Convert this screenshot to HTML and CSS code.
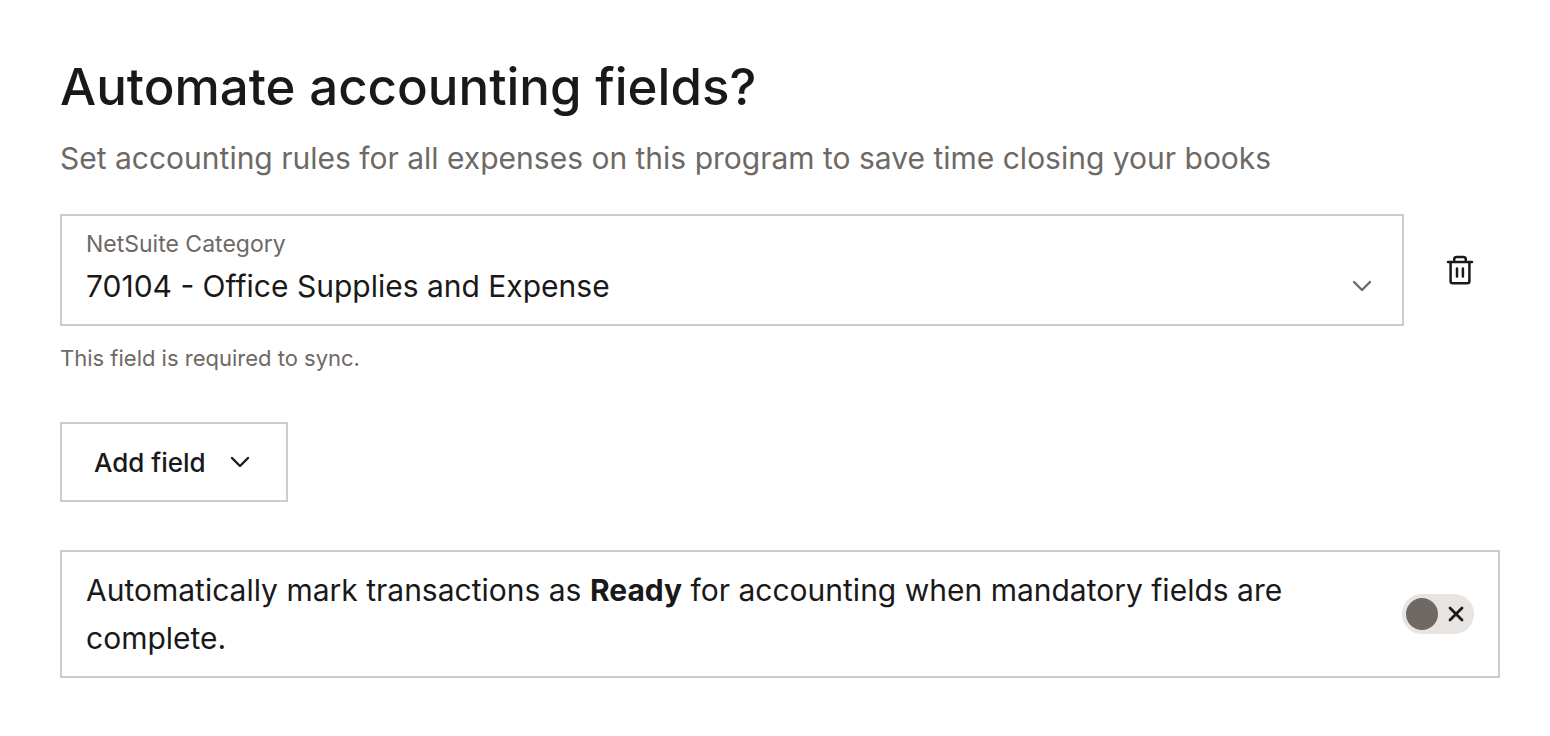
FILE: index.html
```html
<!DOCTYPE html>
<html lang="en">
<head>
    <meta charset="UTF-8">
    <meta name="viewport" content="width=device-width, initial-scale=1.0">
    <title>Automate accounting fields</title>
    <link rel="stylesheet" href="styles.css">
</head>
<body>
<main class="page">
    <h1 class="title">Automate accounting fields?</h1>
    <p class="subtitle">Set accounting rules for all expenses on this program to save time closing your books</p>
    <form class="rules-form">
        <div class="field-row">
            <div class="field">
                <label class="field-label" for="category">NetSuite Category</label>
                <div class="select-wrapper">
                    <select id="category" class="field-select" aria-describedby="category-hint">
                        <option>70104 - Office Supplies and Expense</option>
                    </select>
                    <svg class="chevron" viewBox="0 0 20 12" aria-hidden="true"><path d="M2 2l8 8 8-8"/></svg>
                </div>
            </div>
            <button type="button" class="delete-button" aria-label="Delete field">
                <svg class="trash" viewBox="0 0 28 32" aria-hidden="true">
                    <path d="M2 7.9h24M8.2 7.5V5.4a2.4 2.4 0 0 1 2.4-2.4h6.8a2.4 2.4 0 0 1 2.4 2.4v2.1M4.6 8v19.2a2 2 0 0 0 2 2h14.8a2 2 0 0 0 2-2V8M11 14.5v8M16.9 14.5v8"/>
                </svg>
            </button>
        </div>
        <p id="category-hint" class="hint">This field is required to sync.</p>
        <button type="button" class="add-button">
            Add field
            <svg class="chevron chevron-dark" viewBox="0 0 20 12" aria-hidden="true"><path d="M2 2l8 8 8-8"/></svg>
        </button>
        <div class="toggle-row">
            <label class="toggle-label" for="autoReady">Automatically mark transactions as <strong>Ready</strong> for accounting when mandatory fields are complete.</label>
            <span class="toggle">
                <input type="checkbox" role="switch" id="autoReady" class="toggle-input">
                <svg class="toggle-icon" viewBox="0 0 16 16" aria-hidden="true"><path d="M2 2l12 12M14 2L2 14"/></svg>
            </span>
        </div>
    </form>
</main>
</body>
</html>
```

FILE: styles.css
```css
* {
    box-sizing: border-box;
}
body {
    margin: 0;
    background-color: #fff;
    color: #1a1919;
    font-family: Inter, "Liberation Sans", sans-serif;
}
.page {
    padding: 56px 50px 56px 60px;
}
.title {
    margin: 0;
    font-size: 51px;
    line-height: 62px;
    font-weight: 500;
}
.subtitle {
    margin: 16px 0 32px;
    font-size: 30px;
    line-height: 48px;
    color: #6e6965;
}
.field-row {
    display: flex;
    align-items: center;
}
.field {
    flex: 1;
    padding: 12px 24px;
    border: 2px solid #d0cbc7;
}
.field-label {
    display: block;
    font-size: 23px;
    line-height: 32px;
    color: #6e6965;
}
.select-wrapper {
    display: grid;
    align-items: center;
}
.field-select {
    grid-area: 1 / 1;
    width: 100%;
    height: 52px;
    padding: 0;
    border: none;
    background: none;
    color: #1a1919;
    font: inherit;
    font-size: 30px;
    appearance: none;
}
.chevron {
    width: 20px;
    height: 12px;
    fill: none;
    stroke: #6e6965;
    stroke-width: 2.4;
    stroke-linecap: round;
    stroke-linejoin: round;
}
.select-wrapper .chevron {
    grid-area: 1 / 1;
    justify-self: end;
    margin-right: 6px;
    pointer-events: none;
}
.delete-button {
    display: flex;
    justify-content: center;
    width: 96px;
    padding: 16px 0;
    margin-left: 8px;
    margin-right: -8px;
    border: none;
    background: none;
    cursor: pointer;
}
.trash {
    width: 28px;
    height: 32px;
    fill: none;
    stroke: #1a1919;
    stroke-width: 2.5;
    stroke-linecap: round;
}
.hint {
    margin: 16px 0 48px;
    font-size: 22px;
    line-height: 32px;
    color: #6e6965;
}
.add-button {
    display: flex;
    align-items: center;
    gap: 24px;
    height: 80px;
    padding: 0 36px 0 32px;
    border: 2px solid #d0cbc7;
    background-color: #fff;
    color: #1a1919;
    font: inherit;
    font-size: 26px;
    font-weight: 500;
    cursor: pointer;
}
.chevron-dark {
    stroke: #1a1919;
}
.toggle-row {
    display: flex;
    align-items: center;
    gap: 96px;
    margin-top: 48px;
    padding: 14px 24px;
    border: 2px solid #d0cbc7;
}
.toggle-label {
    flex: 1;
    font-size: 30px;
    line-height: 48px;
}
.toggle {
    display: grid;
    flex: none;
    align-items: center;
}
.toggle-input {
    grid-area: 1 / 1;
    width: 72px;
    height: 40px;
    margin: 0;
    padding: 4px;
    border-radius: 20px;
    background-color: #e8e4e1;
    appearance: none;
    cursor: pointer;
}
.toggle-input::before {
    content: "";
    display: block;
    width: 32px;
    height: 32px;
    border-radius: 50%;
    background-color: #6e6965;
}
.toggle-icon {
    grid-area: 1 / 1;
    justify-self: end;
    width: 16px;
    height: 16px;
    margin-right: 10px;
    fill: none;
    stroke: #1a1919;
    stroke-width: 2.8;
    stroke-linecap: round;
    pointer-events: none;
}
```
